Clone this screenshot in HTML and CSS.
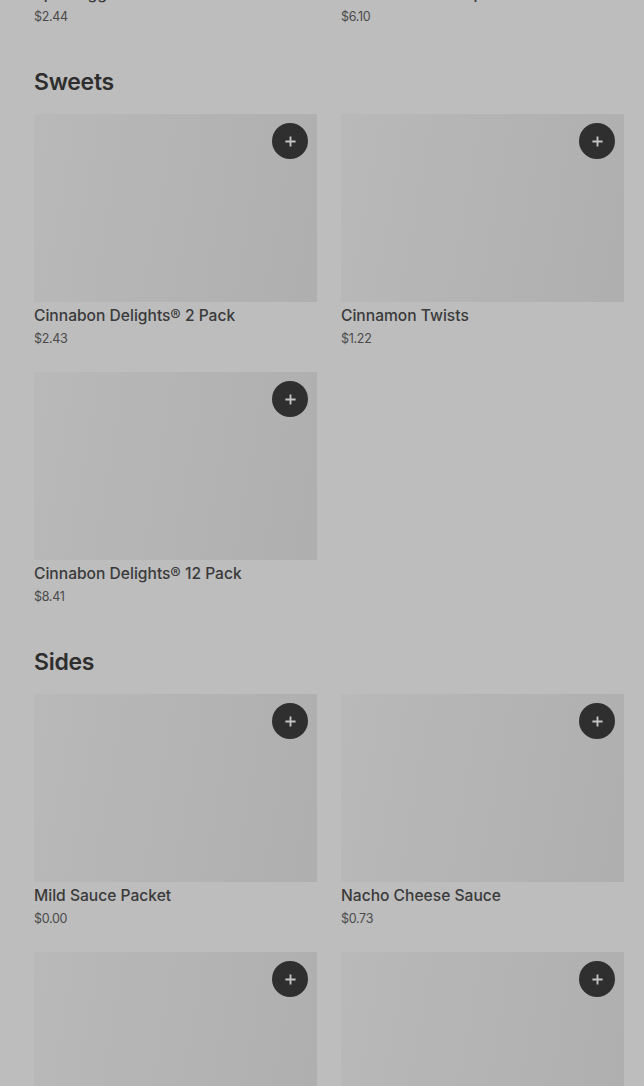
FILE: index.html
```html
<!DOCTYPE html>
<html lang="en">
<head>
<meta charset="utf-8">
<title>Menu</title>
<link rel="stylesheet" href="styles.css">
</head>
<body>
<main class="menu">
  <section class="category category--scrolled">
    <div class="grid">
      <article class="item item--textonly">
        <h3 class="item-name">5pc Nuggets Combo Box</h3>
        <p class="item-price">$2.44</p>
      </article>
      <article class="item item--textonly">
        <h3 class="item-name">Bacon Club Chalupa</h3>
        <p class="item-price">$6.10</p>
      </article>
    </div>
  </section>

  <section class="category">
    <h2 class="category-title">Sweets</h2>
    <div class="grid">
      <article class="item">
        <div class="item-image"><button class="add" aria-label="Add"><svg viewBox="0 0 14 14"><path d="M7 1.5v11M1.5 7h11"/></svg></button></div>
        <h3 class="item-name">Cinnabon Delights® 2 Pack</h3>
        <p class="item-price">$2.43</p>
      </article>
      <article class="item">
        <div class="item-image"><button class="add" aria-label="Add"><svg viewBox="0 0 14 14"><path d="M7 1.5v11M1.5 7h11"/></svg></button></div>
        <h3 class="item-name">Cinnamon Twists</h3>
        <p class="item-price">$1.22</p>
      </article>
      <article class="item">
        <div class="item-image"><button class="add" aria-label="Add"><svg viewBox="0 0 14 14"><path d="M7 1.5v11M1.5 7h11"/></svg></button></div>
        <h3 class="item-name">Cinnabon Delights® 12 Pack</h3>
        <p class="item-price">$8.41</p>
      </article>
    </div>
  </section>

  <section class="category">
    <h2 class="category-title">Sides</h2>
    <div class="grid">
      <article class="item">
        <div class="item-image"><button class="add" aria-label="Add"><svg viewBox="0 0 14 14"><path d="M7 1.5v11M1.5 7h11"/></svg></button></div>
        <h3 class="item-name">Mild Sauce Packet</h3>
        <p class="item-price">$0.00</p>
      </article>
      <article class="item">
        <div class="item-image"><button class="add" aria-label="Add"><svg viewBox="0 0 14 14"><path d="M7 1.5v11M1.5 7h11"/></svg></button></div>
        <h3 class="item-name">Nacho Cheese Sauce</h3>
        <p class="item-price">$0.73</p>
      </article>
      <article class="item">
        <div class="item-image"><button class="add" aria-label="Add"><svg viewBox="0 0 14 14"><path d="M7 1.5v11M1.5 7h11"/></svg></button></div>
        <h3 class="item-name">Hot Sauce Packet</h3>
        <p class="item-price">$0.00</p>
      </article>
      <article class="item">
        <div class="item-image"><button class="add" aria-label="Add"><svg viewBox="0 0 14 14"><path d="M7 1.5v11M1.5 7h11"/></svg></button></div>
        <h3 class="item-name">Chips and Nacho Cheese Sauce</h3>
        <p class="item-price">$2.19</p>
      </article>
    </div>
  </section>
</main>
</body>
</html>
```

FILE: styles.css
```css
html, body {
  margin: 0;
  padding: 0;
  background: #bdbdbd;
  height: 1086px;
  overflow: hidden;
}
body {
  font-family: Inter, "Noto Sans", "Liberation Sans", sans-serif;
  color: #363636;
}
.menu {
  padding: 0 20px 0 34px;
  margin-top: -20px;
}
.category {
  margin-bottom: 40px;
}
.category-title {
  margin: 0 0 16px;
  font-size: 23px;
  line-height: 32px;
  font-weight: 600;
  color: #2e2e2e;
  letter-spacing: -0.3px;
}
.grid {
  display: grid;
  grid-template-columns: 283px 283px;
  column-gap: 24px;
  row-gap: 24px;
}
.item-image {
  position: relative;
  height: 188px;
  background: linear-gradient(100deg, #b9b9b9 0%, #b4b4b4 45%, #afafaf 100%);
}
.add {
  position: absolute;
  top: 9px;
  right: 9px;
  width: 36px;
  height: 36px;
  border-radius: 50%;
  border: none;
  padding: 0;
  background: #2f2f2f;
  display: flex;
  align-items: center;
  justify-content: center;
}
.add svg {
  width: 13px;
  height: 13px;
  stroke: #c4c4c4;
  stroke-width: 2;
  fill: none;
}
.item-name {
  margin: 3px 0 0;
  font-size: 15.6px;
  line-height: 22px;
  font-weight: 500;
  color: #3a3a3a;
}
.item-price {
  margin: 3px 0 0;
  font-size: 12.5px;
  line-height: 18px;
  font-weight: 400;
  color: #4a4a4a;
  letter-spacing: -0.3px;
}
```
